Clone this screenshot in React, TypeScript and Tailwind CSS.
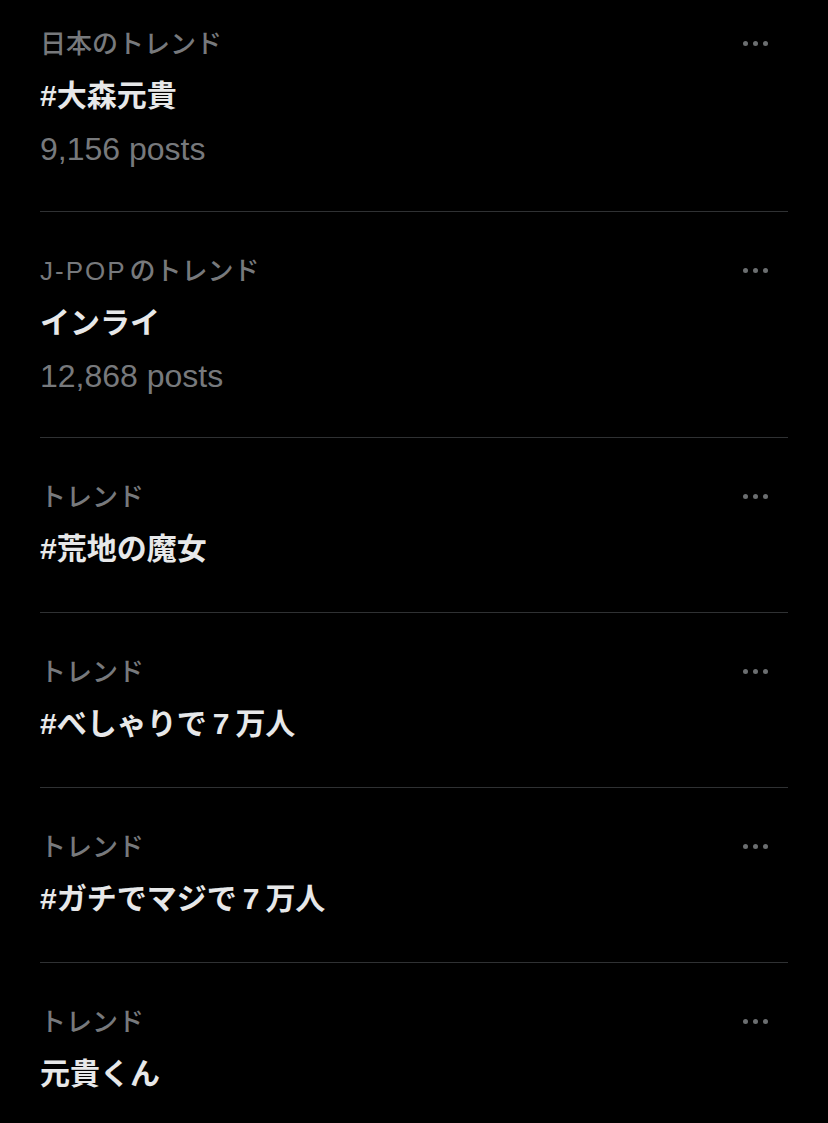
import type { ReactNode } from "react";

type Trend = {
  label: ReactNode;
  title: ReactNode;
  posts?: string;
};

// digit inside Japanese titles sits with a bit of air on both sides
const Num = ({ children }: { children: ReactNode }) => <span className="mx-[6px]">{children}</span>;

const trends: Trend[] = [
  { label: "日本のトレンド", title: "#大森元貴", posts: "9,156 posts" },
  {
    label: (
      <>
        <span className="tracking-[2px]">J-POP</span>
        <span className="ml-[3px]">のトレンド</span>
      </>
    ),
    title: "インライ",
    posts: "12,868 posts",
  },
  { label: "トレンド", title: "#荒地の魔女" },
  { label: "トレンド", title: <>#べしゃりで<Num>7</Num>万人</> },
  { label: "トレンド", title: <>#ガチでマジで<Num>7</Num>万人</> },
  { label: "トレンド", title: "元貴くん" },
];

function MoreDots() {
  return (
    <div className="flex items-center gap-[5px] pr-5 -mt-[2px]">
      <span className="w-[5px] h-[5px] rounded-full bg-[#6b6e70]" />
      <span className="w-[5px] h-[5px] rounded-full bg-[#6b6e70]" />
      <span className="w-[5px] h-[5px] rounded-full bg-[#6b6e70]" />
    </div>
  );
}

function TrendRow({ trend, first }: { trend: Trend; first: boolean }) {
  return (
    <div
      className={`border-[#2f3133] ${first ? "pt-[29px] pb-[42px]" : "border-t pt-[44px]"} ${
        first ? "" : trend.posts ? "pb-[41px]" : "pb-[45px]"
      }`}
    >
      <div className="flex items-center justify-between h-[30px]">
        <span className="text-[26px] leading-[30px] font-medium text-[#77797c]">{trend.label}</span>
        <MoreDots />
      </div>
      <div className="mt-[19px] text-[30px] leading-[36px] font-bold text-[#e7e8e9]">{trend.title}</div>
      {trend.posts && (
        <div className="mt-[15px] text-[32px] leading-[40px] text-[#77797c]">{trend.posts}</div>
      )}
    </div>
  );
}

export default function App() {
  return (
    <div
      className="min-h-[1123px] w-[828px] bg-black overflow-hidden"
      style={{ fontFamily: '"Liberation Sans", "Noto Sans CJK JP", sans-serif' }}
    >
      <div className="mx-10">
        {trends.map((t, i) => (
          <TrendRow key={i} trend={t} first={i === 0} />
        ))}
      </div>
    </div>
  );
}
